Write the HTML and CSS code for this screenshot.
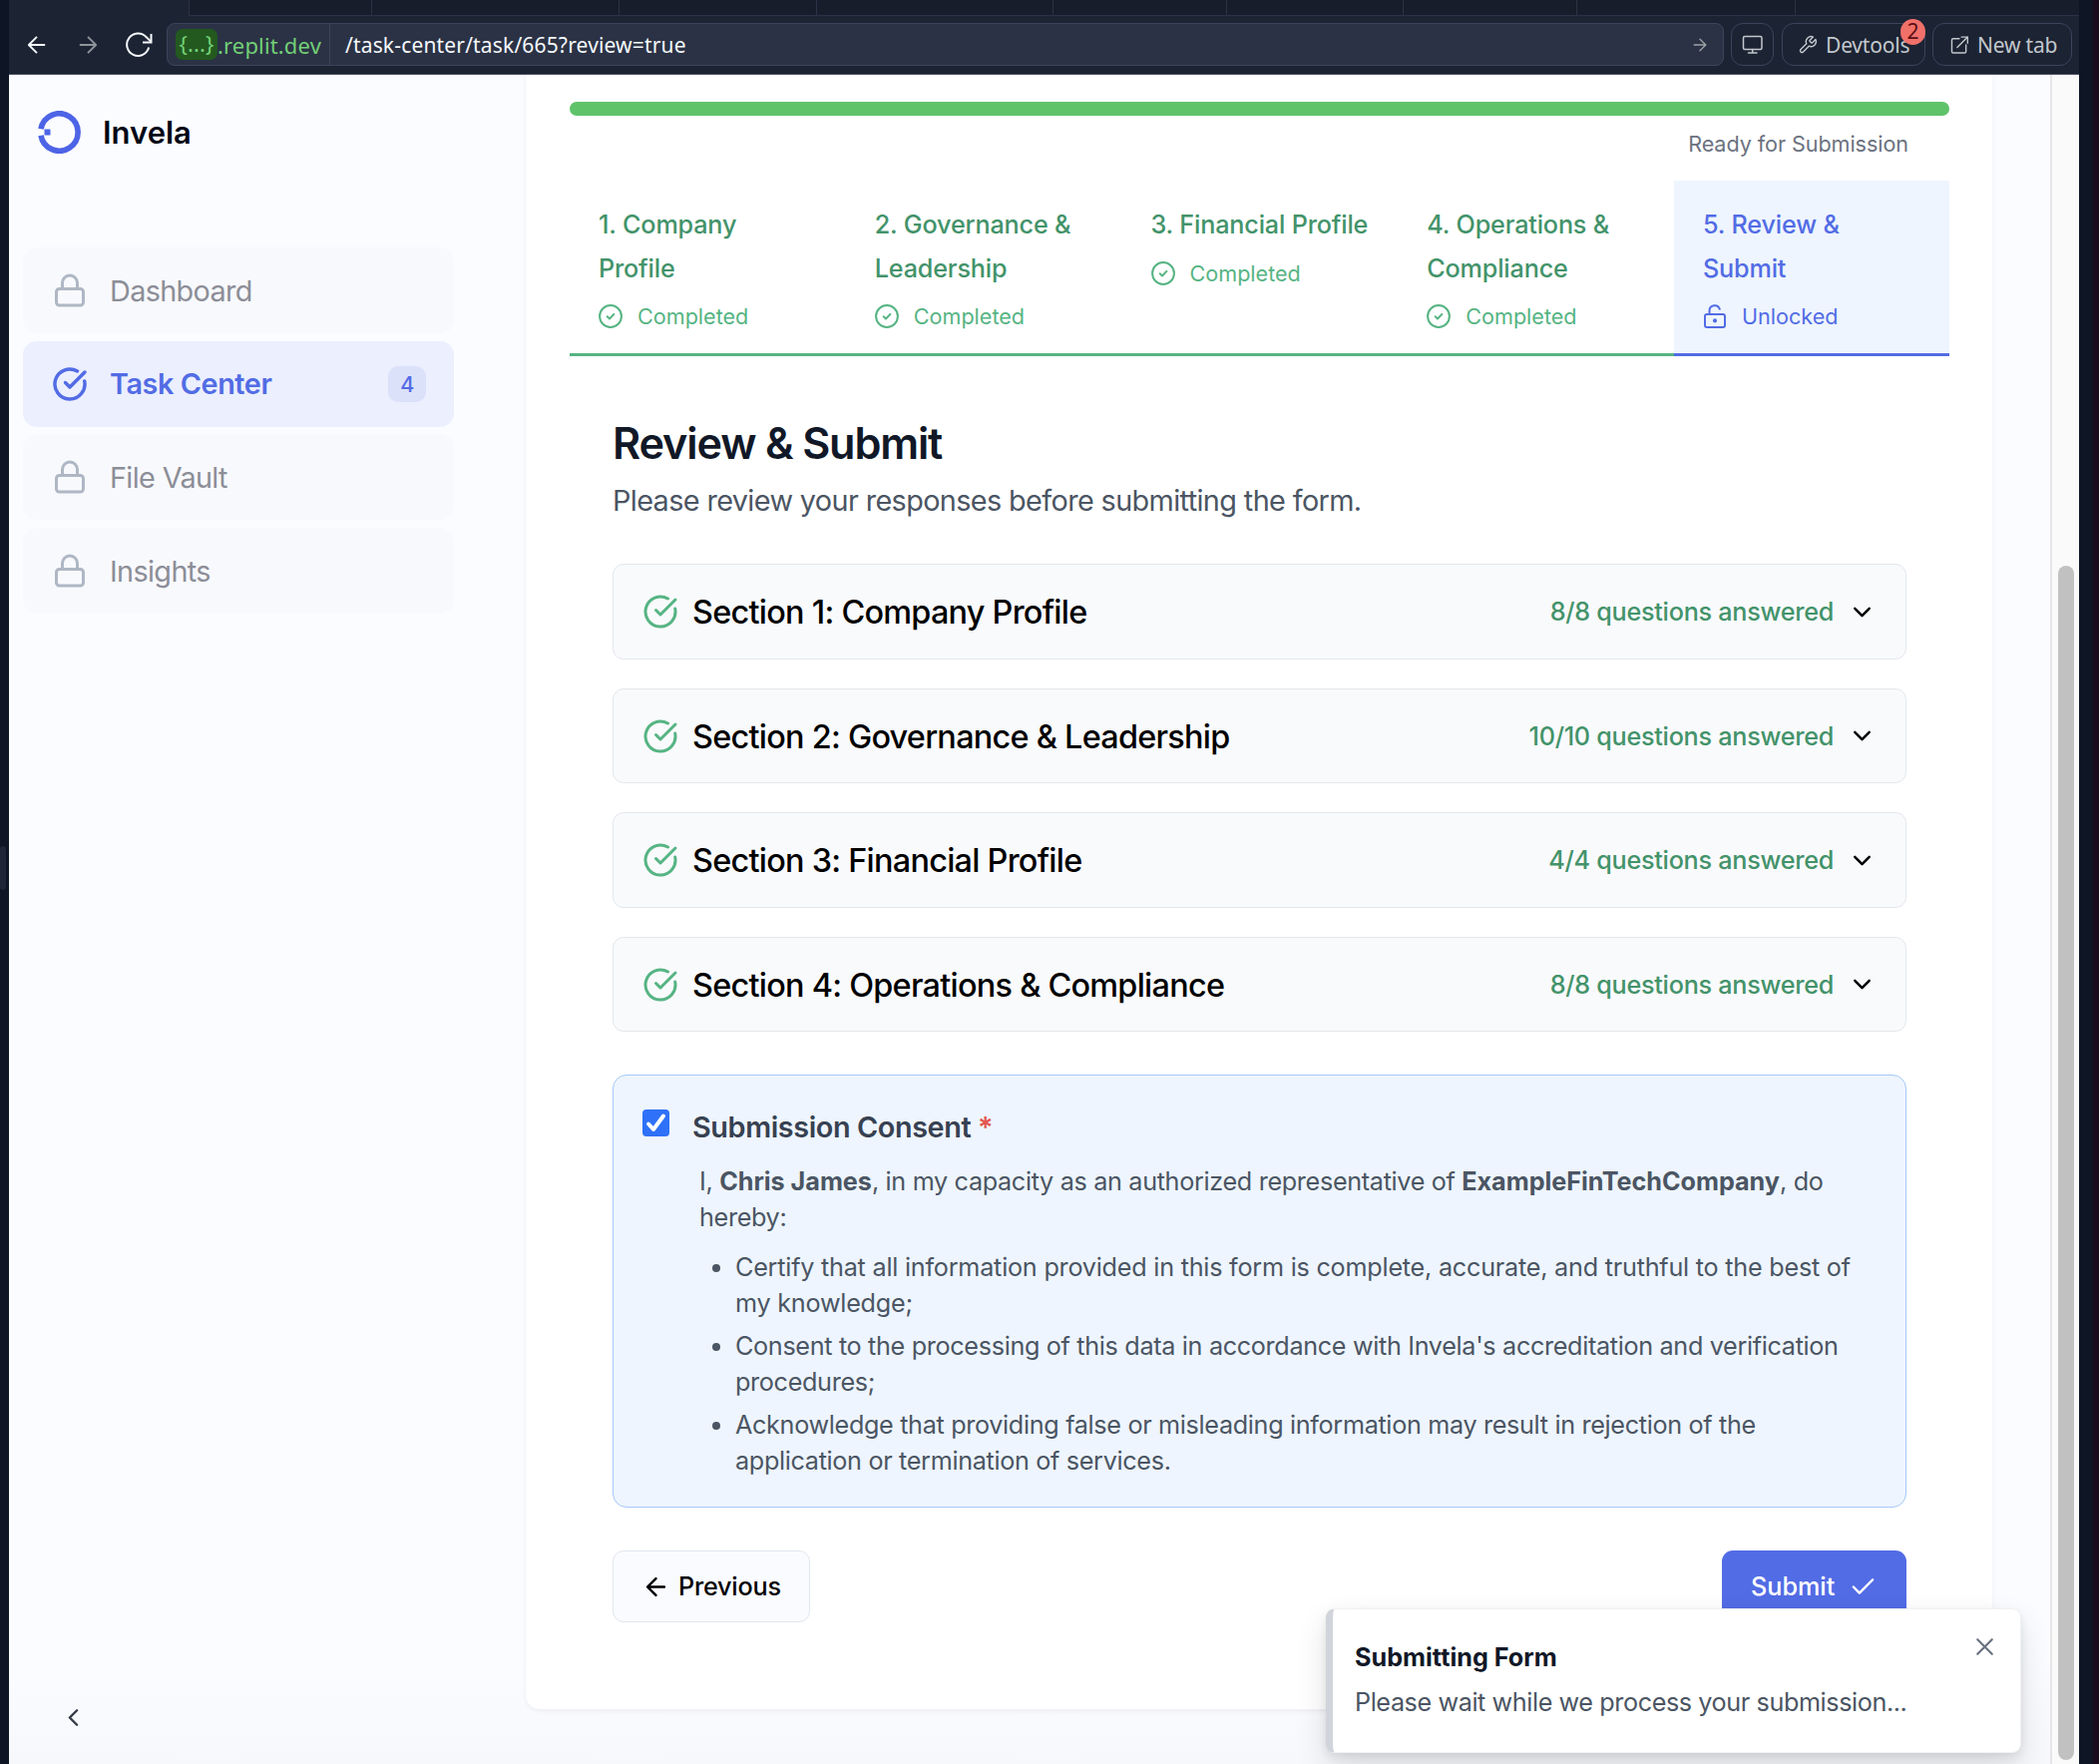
FILE: index.html
```html
<!DOCTYPE html>
<html lang="en">
<head>
<meta charset="utf-8">
<title>Invela – Task Center</title>
<link rel="stylesheet" href="styles.css">
</head>
<body>
<svg class="defs" width="0" height="0" aria-hidden="true">
  <symbol id="lock" viewBox="0 0 24 24"><rect x="3" y="11" width="18" height="11" rx="2"/><path d="M7 11V7a5 5 0 0 1 10 0v4"/></symbol>
  <symbol id="check-circle" viewBox="0 0 24 24"><path d="M21.8 10A10 10 0 1 1 17 3.34"/><path d="m9 11 3 3L22 4"/></symbol>
  <symbol id="circle-check" viewBox="0 0 24 24"><circle cx="12" cy="12" r="10.9"/><path d="m8.7 12.2 2.3 2.3 4.4-4.6"/></symbol>
  <symbol id="unlock" viewBox="0 0 24 24"><rect x="2" y="10" width="20" height="13" rx="2"/><circle cx="12" cy="16.4" r="1.1"/><path d="M6.500 10V6.500a5.300 5.300 0 0 1 10.300-1.700"/></symbol>
  <symbol id="chev-down" viewBox="0 0 24 24"><path d="m6 9 6 6 6-6"/></symbol>
  <symbol id="chev-left" viewBox="0 0 24 24"><path d="m15 18-6-6 6-6"/></symbol>
  <symbol id="arrow-left" viewBox="0 0 24 24"><path d="m12 19-7-7 7-7M19 12H5"/></symbol>
  <symbol id="arrow-right" viewBox="0 0 24 24"><path d="m12 5 7 7-7 7M5 12h14"/></symbol>
  <symbol id="check" viewBox="0 0 24 24"><path d="M20 6 9 17l-5-5"/></symbol>
  <symbol id="close" viewBox="0 0 24 24"><path d="M18 6 6 18M6 6l12 12"/></symbol>
</svg>

<div class="workspace">
  <div class="gutter"><span class="grip"></span></div>
  <div class="pane">
    <div class="tabs">
      <span class="tab tab-active"></span><span class="tab t2"></span><span class="tab t3"></span><span class="tab t4"></span><span class="tab t5"></span><span class="tab t6"></span><span class="tab t7"></span><span class="tab t8"></span><span class="tab t9"></span><span class="tab t10"></span>
    </div>
    <div class="toolbar">
      <div class="history">
        <svg class="i-nav"><use href="#arrow-left"/></svg>
        <svg class="i-nav dim"><use href="#arrow-right"/></svg>
        <svg class="i-reload" viewBox="0 0 28 26"><path d="M24.200 15.600A11.200 11.200 0 1 1 21.500 5L26 9.400"/><path d="M26.500 2v8.500H18"/></svg>
      </div>
      <div class="address">
        <div class="domain"><span class="env">{...}</span><span>.replit.dev</span></div>
        <div class="path"><span class="url">/task-center/task/665?review=true</span><svg class="i-go"><use href="#arrow-right"/></svg></div>
      </div>
      <div class="tool device"><svg class="i-device" viewBox="0 0 22 20"><rect x="1.500" y="1.500" width="18.500" height="13" rx="1.500"/><path d="M10.700 14.500V18M6.500 18h8.500"/></svg></div>
      <div class="tool devtools"><svg class="i-tool" viewBox="0 0 24 24"><path d="M14.700 6.300a1 1 0 0 0 0 1.400l1.600 1.600a1 1 0 0 0 1.400 0l3.770-3.770a6 6 0 0 1-7.940 7.940l-6.910 6.910a2.120 2.120 0 0 1-3-3l6.910-6.910a6 6 0 0 1 7.940-7.940l-3.760 3.760z"/></svg><span>Devtools</span><b class="count">2</b></div>
      <div class="tool newtab"><svg class="i-tool" viewBox="0 0 24 24"><path d="M12 4.500H4.500a1.500 1.500 0 0 0-1.500 1.500V20a1.500 1.500 0 0 0 1.500 1.500h14A1.500 1.500 0 0 0 20 20v-8M14.500 2.500H22V10M22 2.500 9.500 15"/></svg><span>New tab</span></div>
    </div>

    <div class="app">
      <aside class="sidebar">
        <div class="brand">
          <svg class="logo" viewBox="0 0 43 43"><path d="M3 18.300A18.700 18.700 0 1 1 3 24.700"/><rect x="6.500" y="18.500" width="6" height="6"/></svg>
          <span>Invela</span>
        </div>
        <nav class="nav">
          <a class="item"><svg class="i-side"><use href="#lock"/></svg><span>Dashboard</span></a>
          <a class="item item-active"><svg class="i-side"><use href="#check-circle"/></svg><span>Task Center</span><b class="badge">4</b></a>
          <a class="item"><svg class="i-side"><use href="#lock"/></svg><span>File Vault</span></a>
          <a class="item"><svg class="i-side"><use href="#lock"/></svg><span>Insights</span></a>
        </nav>
        <svg class="collapse"><use href="#chev-left"/></svg>
      </aside>

      <main class="content">
        <div class="card">
          <div class="progress"></div>
          <p class="ready">Ready for Submission</p>
          <div class="steps">
            <div class="step"><h3>1. Company<br>Profile</h3><p><svg class="i-step"><use href="#circle-check"/></svg>Completed</p></div>
            <div class="step"><h3>2. Governance &amp;<br>Leadership</h3><p><svg class="i-step"><use href="#circle-check"/></svg>Completed</p></div>
            <div class="step step-short"><h3>3. Financial Profile</h3><p><svg class="i-step"><use href="#circle-check"/></svg>Completed</p></div>
            <div class="step"><h3>4. Operations &amp;<br>Compliance</h3><p><svg class="i-step"><use href="#circle-check"/></svg>Completed</p></div>
            <div class="step step-current"><h3>5. Review &amp;<br>Submit</h3><p><svg class="i-step"><use href="#unlock"/></svg>Unlocked</p></div>
          </div>
          <section class="review">
            <h1>Review &amp; Submit</h1>
            <p class="lead">Please review your responses before submitting the form.</p>
            <div class="sections">
              <div class="row"><svg class="i-sec"><use href="#check-circle"/></svg><h2>Section 1: Company Profile</h2><span class="answered">8/8 questions answered</span><svg class="i-chev"><use href="#chev-down"/></svg></div>
              <div class="row"><svg class="i-sec"><use href="#check-circle"/></svg><h2>Section 2: Governance &amp; Leadership</h2><span class="answered">10/10 questions answered</span><svg class="i-chev"><use href="#chev-down"/></svg></div>
              <div class="row"><svg class="i-sec"><use href="#check-circle"/></svg><h2>Section 3: Financial Profile</h2><span class="answered">4/4 questions answered</span><svg class="i-chev"><use href="#chev-down"/></svg></div>
              <div class="row"><svg class="i-sec"><use href="#check-circle"/></svg><h2>Section 4: Operations &amp; Compliance</h2><span class="answered">8/8 questions answered</span><svg class="i-chev"><use href="#chev-down"/></svg></div>
            </div>
            <div class="consent">
              <svg class="checkbox" viewBox="0 0 27 27"><rect width="27" height="27" rx="4"/><path d="m6 14.500 5 5.500L21 6.500"/></svg>
              <div class="terms">
                <h4>Submission Consent <span class="star">*</span></h4>
                <div class="legal">
                  <p>I, <b>Chris James</b>, in my capacity as an authorized representative of <b>ExampleFinTechCompany</b>, do<br>hereby:</p>
                  <ul>
                    <li class="certify">Certify that all information provided in this form is complete, accurate, and truthful to the best of<br>my knowledge;</li>
                    <li>Consent to the processing of this data in accordance with Invela's accreditation and verification<br>procedures;</li>
                    <li>Acknowledge that providing false or misleading information may result in rejection of the<br>application or termination of services.</li>
                  </ul>
                </div>
              </div>
            </div>
            <div class="actions">
              <button class="btn previous"><svg class="i-btn"><use href="#arrow-left"/></svg>Previous</button>
              <button class="btn submit">Submit<svg class="i-btn"><use href="#check"/></svg></button>
            </div>
          </section>
        </div>
      </main>
      <div class="scrollbar"><div class="thumb"></div></div>

      <div class="toast">
        <div class="toast-text"><h5>Submitting Form</h5><p>Please wait while we process your submission...</p></div>
        <svg class="i-close"><use href="#close"/></svg>
      </div>
    </div>
  </div>
  <div class="edge"></div>
</div>
</body>
</html>
```
FILE: styles.css
```css
* { box-sizing: border-box; margin: 0; padding: 0; }
body { width: 2104px; height: 1768px; overflow: hidden; font-family: Inter, "Liberation Sans", sans-serif; background: #0e1525; }
svg { fill: none; stroke: currentColor; stroke-width: 2; stroke-linecap: round; stroke-linejoin: round; flex: none; display: block; }
.defs { position: absolute; }

.workspace { display: grid; grid-template-columns: 9px 2075px 20px; height: 1768px; }
.gutter { display: flex; align-items: center; }
.grip { width: 6px; height: 44px; margin-top: -28px; border-radius: 3px; background: #1e2536; }
.edge { background: #0e1525; border-right: 6px solid #190a1c; }
.pane { display: grid; grid-template-rows: 16px 59px 1693px; background: #1c2333; }

/* editor tabs and browser bar */
.tabs { display: flex; }
.tab { background: #171d2a; border-left: 1px solid #2b3245; border-bottom: 1px solid #2b3245; }
.tab-active { width: 180px; background: #1c2333; border: 0; }
.t2 { width: 183px; } .t3 { width: 248px; } .t4 { width: 198px; } .t5 { width: 237px; }
.t6 { width: 174px; } .t7 { width: 177px; } .t8 { width: 174px; } .t9 { width: 219px; } .t10 { flex: 1; }
.toolbar { display: flex; align-items: flex-start; padding: 7px 7px 0 14px; border-bottom: 1px solid #4b5162; font-size: 21px; color: #c2c8cc; font-family: "Noto Sans", sans-serif; }
.history { display: flex; align-items: center; gap: 23px; width: 144px; height: 43px; color: #f5f9fc; }
.i-nav { width: 28px; height: 28px; stroke-width: 1.6; stroke-linecap: butt; }
.dim { color: #8f949c; }
.i-reload { width: 28px; height: 26px; stroke-linecap: butt; stroke-linejoin: miter; }
.address { display: flex; width: 1561px; height: 43px; border: 1px solid #3c445c; border-radius: 8px; background: #2b3245; }
.domain { display: flex; align-items: center; width: 163px; padding-left: 8px; border-right: 1px solid #3c445c; color: #72cf76; font-size: 22px; letter-spacing: .15px; white-space: nowrap; }
.env { width: 42px; height: 31px; line-height: 29px; border-radius: 7px; background: #23591f; text-align: center; }
.path { display: flex; flex: 1; align-items: center; justify-content: space-between; padding: 0 13px 0 15px; color: #f5f9fc; letter-spacing: .16px; }
.i-go { width: 20px; height: 20px; color: #9da2a6; stroke-width: 1.6; }
.tool { position: relative; display: flex; align-items: center; height: 43px; margin-left: 8px; border: 1px solid #3c445c; border-radius: 12px; white-space: nowrap; }
.device { width: 43px; justify-content: center; margin-left: 7px; }
.i-device { width: 22px; height: 20px; stroke-width: 1.5; }
.devtools { width: 144px; padding-left: 15px; gap: 8px; letter-spacing: -.2px; }
.newtab { width: 140px; margin-left: 7px; padding-left: 16px; gap: 8px; letter-spacing: -.2px; }
.i-tool { width: 20px; height: 20px; stroke-width: 1.7; }
.count { position: absolute; right: -1px; top: -5px; width: 25px; height: 26px; border-radius: 13px; background: #f0706a; color: #5c0f12; font-weight: 400; line-height: 25px; text-align: center; }

/* application */
.app { position: relative; display: grid; grid-template-columns: 518px 1528px 29px; overflow: hidden; background: linear-gradient(#fbfcff 1590px, #f7f8fb); }
.sidebar { display: flex; flex-direction: column; padding: 36px 0 32px 14px; }
.brand { display: flex; align-items: center; gap: 22px; height: 43px; padding-left: 15px; color: #030716; font-size: 31px; font-weight: 600; }
.logo { width: 43px; height: 43px; color: #4d64e6; stroke-width: 5.600; stroke-linecap: butt; }
.logo rect { fill: currentColor; stroke: none; }
.nav { display: flex; flex-direction: column; gap: 7.700px; margin-top: 94px; }
.item { display: flex; align-items: center; width: 432px; height: 86px; padding: 0 28px 0 29px; border-radius: 14px; background: #f8f9fd; color: #8c8e97; font-size: 28.800px; letter-spacing: -.64px; }
.item span { flex: 1; margin-left: 22px; }
.i-side { width: 36px; height: 36px; color: #afb7c4; }
.item-active { background: #ebeffe; color: #526ce5; font-weight: 600; letter-spacing: -.43px; }
.item-active .i-side { color: #526ce5; stroke-width: 2.300; }
.badge { width: 38px; height: 36px; border-radius: 10px; background: #dce1fa; font-size: 21.600px; font-weight: 500; line-height: 36px; text-align: center; }
.collapse { width: 29px; height: 29px; margin: auto 0 0 36px; color: #333946; }

.card { width: 1470px; height: 1638px; padding: 27px 43px 0 44px; border-radius: 0 0 14px 14px; background: #fff; box-shadow: 0 2px 5px rgba(20, 30, 60, .06); }
.progress { height: 14px; border-radius: 7px; background: #5fc36a; }
.ready { height: 65px; padding: 10px 41px 0 0; color: #6b7280; font-size: 21.600px; line-height: 36px; letter-spacing: -.07px; text-align: right; }
.steps { display: grid; grid-template-columns: repeat(4, 276.750px) 276px; height: 176px; }
.step { padding: 22px 0 0 29px; border-bottom: 3px solid #56b483; color: #56b483; }
.step h3 { color: #43936a; font-size: 25.200px; font-weight: 500; line-height: 44px; letter-spacing: -.17px; white-space: nowrap; }
.step p { display: flex; align-items: center; gap: 15px; height: 40px; margin-top: 6px; font-size: 21.600px; }
.step-short p { margin-top: 7px; }
.i-step { width: 24px; height: 24px; }
.step-current, .step-current h3 { color: #526ce5; }
.step-current { border-color: #526ce5; background: #eef5fe; }

.review { padding: 58px 43px 0 43px; }
.review h1 { height: 58px; color: #111827; font-size: 43.200px; font-weight: 600; line-height: 58px; letter-spacing: -1.150px; }
.lead { height: 56px; color: #4b5563; font-size: 28.800px; line-height: 57px; letter-spacing: -.61px; }
.sections { display: grid; gap: 29px; margin-top: 36px; }
.row { display: flex; align-items: center; height: 95.500px; padding: 1px 29px 0 29px; border: 1px solid #e4e7eb; border-radius: 11px; background: #f9fafc; }
.i-sec { width: 36px; height: 36px; color: #56b483; }
.row h2 { flex: 1; margin-left: 14px; padding-top: 1px; color: #000; font-size: 32.400px; font-weight: 500; letter-spacing: -.73px; white-space: nowrap; }
.answered { color: #43936a; font-size: 25.200px; font-weight: 500; letter-spacing: -.27px; white-space: nowrap; }
.i-chev { width: 29px; height: 29px; margin-left: 14px; color: #000; }

.consent { display: flex; height: 434px; margin-top: 43px; padding: 34px 0 0 29px; border: 1px solid #a4c8f8; border-radius: 14px; background: #eef5fe; }
.checkbox { width: 27px; height: 27px; fill: #2f71f8; stroke: none; }
.checkbox path { fill: none; stroke: #fff; stroke-width: 4; }
.terms { margin-left: 23px; color: #4b5563; }
.terms h4 { color: #374151; font-size: 28.800px; font-weight: 600; line-height: 36px; letter-spacing: -.4px; }
.star { color: #e25550; }
.legal { padding-left: 7px; margin-top: 18px; font-size: 25.200px; line-height: 36px; letter-spacing: -.33px; white-space: nowrap; }
.legal b { font-weight: 700; letter-spacing: -.03px; }
.legal ul { display: grid; gap: 7px; margin-top: 14px; padding-left: 36px; }
.certify { letter-spacing: -.23px; }

.actions { display: flex; justify-content: space-between; margin-top: 43px; }
.btn { display: flex; align-items: center; height: 72px; border: 0; border-radius: 11px; font: 500 25.200px Inter, sans-serif; }
.previous { width: 198px; padding-left: 28px; gap: 8px; border: 1px solid #e2e6ee; background: #fafbff; color: #000; letter-spacing: -.22px; }
.submit { width: 185px; padding-left: 29px; gap: 14px; background: #526ce5; color: #fff; }
.i-btn { width: 29px; height: 29px; }

.scrollbar { padding: 492px 5px 0 6px; border-left: 2px solid #e6e6e8; background: #fafafa; }
.thumb { width: 16px; height: 1197px; border-radius: 8px; background: #c1c1c1; }

.toast { position: absolute; left: 1320px; top: 1537px; display: flex; justify-content: space-between; width: 697px; height: 145px; padding: 30px 21px 0 22px; border: 1px solid #f0f1f3; border-left: 7px solid #d1d5db; border-radius: 9px; background: #fff; box-shadow: 0 14px 32px rgba(0, 0, 0, .12), 0 4px 10px rgba(0, 0, 0, .08); font-size: 25.200px; line-height: 36px; }
.toast h5 { color: #111827; font-size: 25.200px; font-weight: 700; }
.toast p { margin-top: 9px; color: #4b5563; letter-spacing: -.41px; white-space: nowrap; }
.i-close { width: 29px; height: 29px; margin-top: -7px; color: #6b7280; stroke-width: 1.800; }
```
